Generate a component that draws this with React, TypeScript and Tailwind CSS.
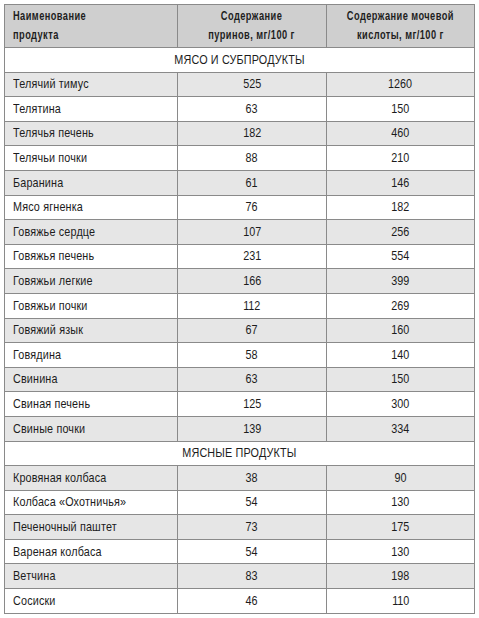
const meat: [string, string, string][] = [
  ['Телячий тимус', '525', '1260'],
  ['Телятина', '63', '150'],
  ['Телячья печень', '182', '460'],
  ['Телячьи почки', '88', '210'],
  ['Баранина', '61', '146'],
  ['Мясо ягненка', '76', '182'],
  ['Говяжье сердце', '107', '256'],
  ['Говяжья печень', '231', '554'],
  ['Говяжьи легкие', '166', '399'],
  ['Говяжьи почки', '112', '269'],
  ['Говяжий язык', '67', '160'],
  ['Говядина', '58', '140'],
  ['Свинина', '63', '150'],
  ['Свиная печень', '125', '300'],
  ['Свиные почки', '139', '334'],
];

const products: [string, string, string][] = [
  ['Кровяная колбаса', '38', '90'],
  ['Колбаса «Охотничья»', '54', '130'],
  ['Печеночный паштет', '73', '175'],
  ['Вареная колбаса', '54', '130'],
  ['Ветчина', '83', '198'],
  ['Сосиски', '46', '110'],
];

// narrow text: Arial-width font squeezed to a condensed face
const Narrow = ({ children, left }: { children: React.ReactNode; left?: boolean }) => (
  <span className={`inline-block whitespace-nowrap scale-x-[0.8] ${left ? 'origin-left' : 'origin-center'}`}>
    {children}
  </span>
);

const HeadText = ({ children, left }: { children: React.ReactNode; left?: boolean }) => (
  <span className={`inline-block whitespace-nowrap scale-x-[0.74] ${left ? 'origin-left' : 'origin-center'}`}>
    {children}
  </span>
);

const Section = ({ title }: { title: string }) => (
  <tr className="h-[24.6px] bg-white">
    <td colSpan={3} className="border border-[#8a8a8a] text-center tracking-[0.2px]">
      <Narrow>{title}</Narrow>
    </td>
  </tr>
);

const Rows = ({ rows }: { rows: [string, string, string][] }) => (
  <>
    {rows.map(([name, purines, acid], i) => (
      <tr key={name} className={`h-[24.6px] ${i % 2 === 0 ? 'bg-[#e6e6e6]' : 'bg-white'}`}>
        <td className="border border-[#8a8a8a] pl-[8px] tracking-[0.2px]">
          <Narrow left>{name}</Narrow>
        </td>
        <td className="border border-[#8a8a8a] text-center">
          <Narrow>{purines}</Narrow>
        </td>
        <td className="border border-[#8a8a8a] text-center">
          <Narrow>{acid}</Narrow>
        </td>
      </tr>
    ))}
  </>
);

export default function App() {
  return (
    <div className="min-h-[618px] bg-white p-[4px]" style={{ fontFamily: '"Liberation Sans", Arial, sans-serif' }}>
      <table className="w-[470px] table-fixed border-collapse border border-[#4a4a4a] text-[13.5px] text-[#1c1c1c]">
        <colgroup>
          <col className="w-[173px]" />
          <col className="w-[149px]" />
          <col className="w-[148px]" />
        </colgroup>
        <thead>
          <tr className="h-[43px] bg-[#cfcfcf] text-[12.5px] text-[#1e1e1e] leading-[19px]">
            <th className="border border-[#8a8a8a] pl-[8px] text-left font-bold tracking-[0.6px]">
              <HeadText left>
                Наименование
                <br />
                продукта
              </HeadText>
            </th>
            <th className="border border-[#8a8a8a] text-center font-bold tracking-[0.6px]">
              <HeadText>
                Содержание
                <br />
                пуринов, мг/100 г
              </HeadText>
            </th>
            <th className="border border-[#8a8a8a] text-center font-bold tracking-[0.6px]">
              <HeadText>
                Содержание мочевой
                <br />
                кислоты, мг/100 г
              </HeadText>
            </th>
          </tr>
        </thead>
        <tbody>
          <Section title="МЯСО И СУБПРОДУКТЫ" />
          <Rows rows={meat} />
          <Section title="МЯСНЫЕ ПРОДУКТЫ" />
          <Rows rows={products} />
        </tbody>
      </table>
    </div>
  );
}
